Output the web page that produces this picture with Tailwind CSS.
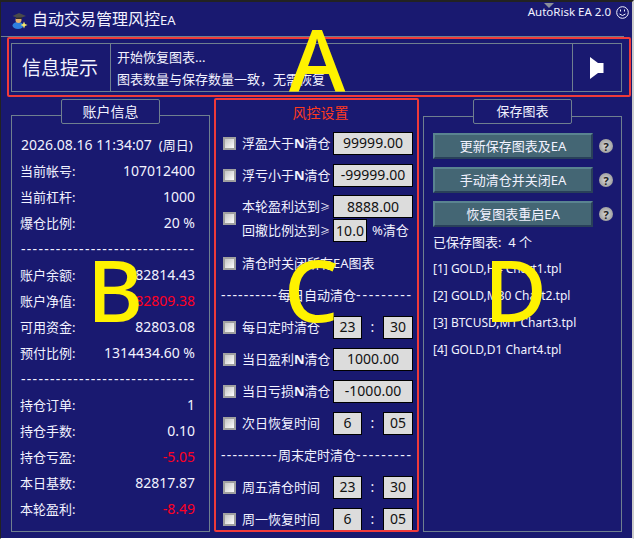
<!DOCTYPE html>
<html lang="en">
<head>
    <meta charset="UTF-8">
    <script src="https://cdn.jsdelivr.net/npm/@tailwindcss/browser@4"></script>
    <title>AutoRisk EA</title>
</head>
<body class="bg-[#191970] overflow-hidden">
<div class="relative w-[634px] h-[539px] overflow-hidden bg-[#191970] text-[#f2f2ff] text-[13px] leading-none border-t-2 border-r-2 border-l border-b border-t-[#222] border-r-[#ccc] border-l-[#222] border-b-white font-['Noto_Sans','Noto_Sans_CJK_SC',sans-serif]">

    <!-- Title bar -->
    <div class="flex items-center justify-between h-[35px] border-b border-[#6f7f8f] mr-[8px]">
        <div class="flex items-center pl-[10px] gap-[3px] mt-[1px]">
            <svg width="18" height="18" viewBox="0 0 18 18">
                <ellipse cx="7" cy="14.5" rx="5.5" ry="3.5" fill="#2f7fe0"/>
                <circle cx="7.5" cy="9" r="3" fill="#e8b070"/>
                <path d="M1.5 5 L8 2 L15 5 L8 7.5 Z" fill="#4a4a4a"/>
                <path d="M5 6.5 H11 V8 H5 Z" fill="#2c2c2c"/>
                <path d="M13 10.5 L14 13 L16.5 14 L14 15 L13 17.5 L12 15 L9.5 14 L12 13 Z" fill="#f6e86a"/>
            </svg>
            <span class="text-[16px] font-['Liberation_Serif','Noto_Sans_CJK_SC',serif]">自动交易管理风控<span class="text-[13px] font-['Noto_Sans',sans-serif]">EA</span></span>
        </div>
        <div class="flex items-center gap-[5px] -mt-[14px] text-[11.5px] -mr-[5px]">
            <span>AutoRisk EA 2.0</span>
            <svg width="13" height="13" viewBox="0 0 13 13" fill="none" stroke="#f2f2ff">
                <circle cx="6.5" cy="6.5" r="5.8"/>
                <path d="M3.5 8 Q6.5 11 9.5 8"/>
                <path d="M4.5 3.5v2M8.5 3.5v2"/>
            </svg>
        </div>
    </div>
    <!-- small drag marker at the top edge -->
    <div class="absolute left-[543px] top-[1px] w-0 h-0 border-l-[5px] border-r-[5px] border-t-[5px] border-l-transparent border-r-transparent border-t-[#8a8f9a]"></div>

    <!-- Info box -->
    <div class="mx-[10px] mt-[6px] h-[49px] w-[611px] flex border border-[#6f7f8f]">
        <div class="w-[99px] border-r border-[#6f7f8f] flex items-center justify-center text-[19px] pt-[2px] pr-[2px]">信息提示</div>
        <div class="flex-1 flex flex-col justify-center gap-[9px] pl-[6px] pt-[2px] text-[13px]">
            <p>开始恢复图表...</p>
            <p>图表数量与保存数量一致，无需恢复</p>
        </div>
        <div class="w-[49px] border-l border-[#6f7f8f] flex items-center justify-center">
            <svg width="14" height="22" viewBox="0 0 14 22"><path d="M0 0 L8 6 H13.5 V16 H8 L0 22 Z" fill="#fff"/></svg>
        </div>
    </div>

    <!-- Panels -->
    <div class="flex mt-[7px] ml-[10px]">
        <!-- Account info -->
        <div class="relative w-[199px] h-[433px]">
            <div class="absolute left-[50px] top-0 w-[99px] h-[25px] border border-[#6f7f8f] rounded-[2px] bg-[#191970] flex items-center justify-center text-[14px] z-10">账户信息</div>
            <div class="absolute left-0 right-0 top-[16px] bottom-0 border border-[#6f7f8f] pl-[8px] pr-[14px] pt-[16px]">
                <div class="h-[26px] flex items-center text-[14px] whitespace-pre pl-[1px]">2026.08.16 11:34:07 <span class="text-[13px]"> (周日)</span></div>
                <div class="h-[26px] flex items-center justify-between"><span>当前帐号:</span><span class="text-[14px]">107012400</span></div>
                <div class="h-[26px] flex items-center justify-between"><span>当前杠杆:</span><span class="text-[14px]">1000</span></div>
                <div class="h-[26px] flex items-center justify-between"><span>爆仓比例:</span><span class="text-[14px]">20 %</span></div>
                <div class="h-[26px] flex items-center overflow-hidden whitespace-nowrap pl-[1px] text-[14px] tracking-[1.3px]">------------------------------</div>
                <div class="h-[26px] flex items-center justify-between"><span>账户余额:</span><span class="text-[14px]">82814.43</span></div>
                <div class="h-[26px] flex items-center justify-between"><span>账户净值:</span><span class="text-[14px] text-[#ff0022]">82809.38</span></div>
                <div class="h-[26px] flex items-center justify-between"><span>可用资金:</span><span class="text-[14px]">82803.08</span></div>
                <div class="h-[26px] flex items-center justify-between"><span>预付比例:</span><span class="text-[14px]">1314434.60 %</span></div>
                <div class="h-[26px] flex items-center overflow-hidden whitespace-nowrap pl-[1px] text-[14px] tracking-[1.3px]">------------------------------</div>
                <div class="h-[26px] flex items-center justify-between"><span>持仓订单:</span><span class="text-[14px]">1</span></div>
                <div class="h-[26px] flex items-center justify-between"><span>持仓手数:</span><span class="text-[14px]">0.10</span></div>
                <div class="h-[26px] flex items-center justify-between"><span>持仓亏盈:</span><span class="text-[14px] text-[#ff0022]">-5.05</span></div>
                <div class="h-[26px] flex items-center justify-between"><span>本日基数:</span><span class="text-[14px]">82817.87</span></div>
                <div class="h-[26px] flex items-center justify-between"><span>本轮盈利:</span><span class="text-[14px] text-[#ff0022]">-8.49</span></div>
            </div>
        </div>

        <!-- Risk settings -->
        <div class="w-[213px] pl-[13px] pr-[5px]">
            <div class="h-[28px] flex items-center justify-center text-[14px] text-[#ff3a1e]">风控设置</div>
            <div class="h-[32px] flex items-center"><input type="checkbox" class="appearance-none w-[13px] h-[13px] mr-[6px] border-2 border-[#a0a0a0] bg-linear-to-br from-[#c4c4c4] to-white"><span class="w-[91px] whitespace-nowrap">浮盈大于<b>N</b>清仓</span><span class="w-[80px] h-[23px] bg-[#dcdcdc] border border-black text-[#111] text-[14px] flex items-center justify-center">99999.00</span></div>
            <div class="h-[32px] flex items-center"><input type="checkbox" class="appearance-none w-[13px] h-[13px] mr-[6px] border-2 border-[#a0a0a0] bg-linear-to-br from-[#c4c4c4] to-white"><span class="w-[91px] whitespace-nowrap">浮亏小于<b>N</b>清仓</span><span class="w-[80px] h-[23px] bg-[#dcdcdc] border border-black text-[#111] text-[14px] flex items-center justify-center">-99999.00</span></div>
            <div class="h-[56px] flex items-center pb-[1px]">
                <input type="checkbox" class="appearance-none w-[13px] h-[13px] mr-[6px] border-2 border-[#a0a0a0] bg-linear-to-br from-[#c4c4c4] to-white">
                <div class="flex flex-col gap-[1px]">
                    <div class="flex items-center"><span class="w-[91px] whitespace-nowrap">本轮盈利达到<span class="text-[10px]">≥</span></span><span class="w-[80px] h-[23px] bg-[#dcdcdc] border border-black text-[#111] text-[14px] flex items-center justify-center">8888.00</span></div>
                    <div class="flex items-center"><span class="w-[91px] whitespace-nowrap">回撤比例达到<span class="text-[10px]">≥</span></span><span class="w-[34px] h-[23px] bg-[#dcdcdc] border border-black text-[#111] text-[14px] flex items-center justify-center">10.0</span><span class="ml-[5px] whitespace-nowrap">%清仓</span></div>
                </div>
            </div>
            <div class="h-[32px] flex items-center"><input type="checkbox" class="appearance-none w-[13px] h-[13px] mr-[6px] border-2 border-[#a0a0a0] bg-linear-to-br from-[#c4c4c4] to-white"><span class="whitespace-nowrap">清仓时关闭所有EA图表</span></div>
            <div class="h-[32px] flex items-center -ml-[2px] whitespace-nowrap"><span class="text-[14px] tracking-[1.2px]">----------</span>每日自动清仓<span class="text-[14px] tracking-[1.8px]">---------</span></div>
            <div class="h-[32px] flex items-center"><input type="checkbox" class="appearance-none w-[13px] h-[13px] mr-[6px] border-2 border-[#a0a0a0] bg-linear-to-br from-[#c4c4c4] to-white"><span class="w-[91px] whitespace-nowrap">每日定时清仓</span><span class="w-[29px] h-[23px] bg-[#dcdcdc] border border-black text-[#111] text-[14px] flex items-center justify-center">23</span><span class="w-[21px] text-center text-[14px]">:</span><span class="w-[30px] h-[23px] bg-[#dcdcdc] border border-black text-[#111] text-[14px] flex items-center justify-center">30</span></div>
            <div class="h-[32px] flex items-center"><input type="checkbox" class="appearance-none w-[13px] h-[13px] mr-[6px] border-2 border-[#a0a0a0] bg-linear-to-br from-[#c4c4c4] to-white"><span class="w-[91px] whitespace-nowrap">当日盈利<b>N</b>清仓</span><span class="w-[80px] h-[23px] bg-[#dcdcdc] border border-black text-[#111] text-[14px] flex items-center justify-center">1000.00</span></div>
            <div class="h-[32px] flex items-center"><input type="checkbox" class="appearance-none w-[13px] h-[13px] mr-[6px] border-2 border-[#a0a0a0] bg-linear-to-br from-[#c4c4c4] to-white"><span class="w-[91px] whitespace-nowrap">当日亏损<b>N</b>清仓</span><span class="w-[80px] h-[23px] bg-[#dcdcdc] border border-black text-[#111] text-[14px] flex items-center justify-center">-1000.00</span></div>
            <div class="h-[32px] flex items-center"><input type="checkbox" class="appearance-none w-[13px] h-[13px] mr-[6px] border-2 border-[#a0a0a0] bg-linear-to-br from-[#c4c4c4] to-white"><span class="w-[91px] whitespace-nowrap">次日恢复时间</span><span class="w-[29px] h-[23px] bg-[#dcdcdc] border border-black text-[#111] text-[14px] flex items-center justify-center">6</span><span class="w-[21px] text-center text-[14px]">:</span><span class="w-[30px] h-[23px] bg-[#dcdcdc] border border-black text-[#111] text-[14px] flex items-center justify-center">05</span></div>
            <div class="h-[32px] flex items-center -ml-[2px] whitespace-nowrap"><span class="text-[14px] tracking-[1.2px]">----------</span>周末定时清仓<span class="text-[14px] tracking-[1.8px]">---------</span></div>
            <div class="h-[32px] flex items-center"><input type="checkbox" class="appearance-none w-[13px] h-[13px] mr-[6px] border-2 border-[#a0a0a0] bg-linear-to-br from-[#c4c4c4] to-white"><span class="w-[91px] whitespace-nowrap">周五清仓时间</span><span class="w-[29px] h-[23px] bg-[#dcdcdc] border border-black text-[#111] text-[14px] flex items-center justify-center">23</span><span class="w-[21px] text-center text-[14px]">:</span><span class="w-[30px] h-[23px] bg-[#dcdcdc] border border-black text-[#111] text-[14px] flex items-center justify-center">30</span></div>
            <div class="h-[32px] flex items-center"><input type="checkbox" class="appearance-none w-[13px] h-[13px] mr-[6px] border-2 border-[#a0a0a0] bg-linear-to-br from-[#c4c4c4] to-white"><span class="w-[91px] whitespace-nowrap">周一恢复时间</span><span class="w-[29px] h-[23px] bg-[#dcdcdc] border border-black text-[#111] text-[14px] flex items-center justify-center">6</span><span class="w-[21px] text-center text-[14px]">:</span><span class="w-[30px] h-[23px] bg-[#dcdcdc] border border-black text-[#111] text-[14px] flex items-center justify-center">05</span></div>
        </div>

        <!-- Saved charts -->
        <div class="relative w-[199px] h-[433px]">
            <div class="absolute left-[50px] top-0 w-[99px] h-[25px] border border-[#6f7f8f] rounded-[2px] bg-[#191970] flex items-center justify-center text-[13px] z-10">保存图表</div>
            <div class="absolute left-0 right-0 top-[17px] bottom-0 border border-[#6f7f8f] pl-[9px] pt-[16px]">
                <div class="flex flex-col gap-[8px]">
                    <div class="flex items-center"><span class="w-[160px] h-[26px] bg-[#446674] border-t-2 border-l-2 border-t-[#5a8490] border-l-[#5a8490] border-b-2 border-r-2 border-b-[#29405a] border-r-[#29405a] flex items-center justify-center">更新保存图表及EA</span><span class="ml-[6px] w-[14px] h-[14px] rounded-full bg-radial from-[#d8d8d8] to-[#8c8c8c] text-[#222] text-[11px] font-bold flex items-center justify-center">?</span></div>
                    <div class="flex items-center"><span class="w-[160px] h-[26px] bg-[#446674] border-t-2 border-l-2 border-t-[#5a8490] border-l-[#5a8490] border-b-2 border-r-2 border-b-[#29405a] border-r-[#29405a] flex items-center justify-center">手动清仓并关闭EA</span><span class="ml-[6px] w-[14px] h-[14px] rounded-full bg-radial from-[#d8d8d8] to-[#8c8c8c] text-[#222] text-[11px] font-bold flex items-center justify-center">?</span></div>
                    <div class="flex items-center"><span class="w-[160px] h-[26px] bg-[#446674] border-t-2 border-l-2 border-t-[#5a8490] border-l-[#5a8490] border-b-2 border-r-2 border-b-[#29405a] border-r-[#29405a] flex items-center justify-center">恢复图表重启EA</span><span class="ml-[6px] w-[14px] h-[14px] rounded-full bg-radial from-[#d8d8d8] to-[#8c8c8c] text-[#222] text-[11px] font-bold flex items-center justify-center">?</span></div>
                </div>
                <p class="mt-[3px] h-[25px] flex items-center whitespace-pre">已保存图表:  4 个</p>
                <p class="h-[27px] flex items-center text-[12px]">[1] GOLD,H4 Chart1.tpl</p>
                <p class="h-[27px] flex items-center text-[12px]">[2] GOLD,M30 Chart2.tpl</p>
                <p class="h-[27px] flex items-center text-[12px]">[3] BTCUSD,M1 Chart3.tpl</p>
                <p class="h-[27px] flex items-center text-[12px]">[4] GOLD,D1 Chart4.tpl</p>
            </div>
        </div>
    </div>

    <!-- Red annotation boxes and letters -->
    <div class="absolute left-[6px] top-[35px] w-[624px] h-[60px] border-2 border-[#f03a3a] rounded-[2px] pointer-events-none"></div>
    <div class="absolute left-[213px] top-[96px] w-[205px] h-[434px] border-2 border-[#f03a3a] rounded-[2px] pointer-events-none"></div>
    <span class="absolute left-[288px] top-[14px] text-[86px] font-medium text-[#fff200]">A</span>
    <span class="absolute left-[86px] top-[244px] text-[86px] font-medium text-[#fff200]">B</span>
    <span class="absolute left-[283px] top-[244px] text-[86px] font-medium text-[#fff200]">C</span>
    <span class="absolute left-[483px] top-[244px] text-[86px] font-medium text-[#fff200]">D</span>
</div>
</body>
</html>
